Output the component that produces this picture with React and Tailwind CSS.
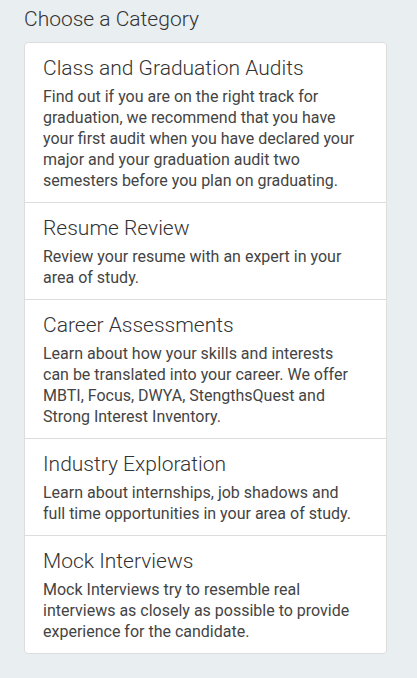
import React from 'react';

const categories = [
  {
    title: 'Class and Graduation Audits',
    text: 'Find out if you are on the right track for graduation, we recommend that you have your first audit when you have declared your major and your graduation audit two semesters before you plan on graduating.',
  },
  {
    title: 'Resume Review',
    text: 'Review your resume with an expert in your area of study.',
  },
  {
    title: 'Career Assessments',
    text: 'Learn about how your skills and interests can be translated into your career. We offer MBTI, Focus, DWYA, StengthsQuest and Strong Interest Inventory.',
  },
  {
    title: 'Industry Exploration',
    text: 'Learn about internships, job shadows and full time opportunities in your area of study.',
  },
  {
    title: 'Mock Interviews',
    text: 'Mock Interviews try to resemble real interviews as closely as possible to provide experience for the candidate.',
  },
];

const App = () => {
  return (
    <div
      className="min-h-[678px] bg-[#e9eef1] pl-6 pt-[5px] pb-6"
      style={{ fontFamily: 'Roboto, "Noto Sans", sans-serif' }}
    >
      <h2 className="text-[21px] leading-[28px] font-light text-[#333] mb-[9px]">Choose a Category</h2>
      <div className="w-[363px] bg-white border border-[#dddddd] rounded-[4px]">
        {categories.map((cat, index) => (
          <div
            key={cat.title}
            className={`pl-[18px] pr-[24px] pt-[10px] pb-[11px] ${index > 0 ? 'border-t border-[#dddddd]' : ''}`}
          >
            <h4 className="text-[21px] leading-[30px] font-light text-[#333] mb-[3px]">{cat.title}</h4>
            <p className="text-[16px] leading-[21px] text-[#444]">{cat.text}</p>
          </div>
        ))}
      </div>
    </div>
  );
};

export default App;
